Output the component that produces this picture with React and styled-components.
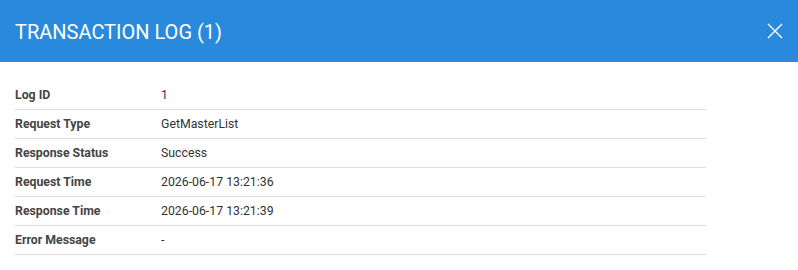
import React from 'react';
import styled, { createGlobalStyle } from 'styled-components';

const GlobalStyle = createGlobalStyle`
  body {
    margin: 0;
    background: #ffffff;
    font-family: Roboto, "Liberation Sans", sans-serif;
  }
`;

const rows = [
  { label: 'Log ID', value: '1' },
  { label: 'Request Type', value: 'GetMasterList' },
  { label: 'Response Status', value: 'Success' },
  { label: 'Request Time', value: '2026-06-17 13:21:36' },
  { label: 'Response Time', value: '2026-06-17 13:21:39' },
  { label: 'Error Message', value: '-' },
];

const App = () => {
  return (
    <Modal>
      <GlobalStyle />
      <Header>
        <Title>TRANSACTION LOG (1)</Title>
        <CloseButton aria-label="Close">
          <svg width="16" height="16" viewBox="0 0 16 16">
            <path d="M1 1 L15 15 M15 1 L1 15" stroke="#ffffff" strokeWidth="1.4" fill="none" />
          </svg>
        </CloseButton>
      </Header>
      <Body>
        <Table>
          <tbody>
            {rows.map((row) => (
              <Row key={row.label}>
                <Label>{row.label}</Label>
                <Value>{row.value}</Value>
              </Row>
            ))}
          </tbody>
        </Table>
      </Body>
    </Modal>
  );
};

const Modal = styled.div`
  width: 798px;
  background: #ffffff;
`;

const Header = styled.div`
  height: 62px;
  background: #2989dd;
  display: flex;
  align-items: center;
  justify-content: space-between;
  padding: 0 15px 0 15px;
  box-sizing: border-box;
`;

const Title = styled.h1`
  margin: 0;
  font-size: 20px;
  font-weight: 400;
  color: #ffffff;
  padding-top: 1px;
`;

const CloseButton = styled.button`
  background: none;
  border: none;
  padding: 0;
  width: 16px;
  height: 16px;
  display: flex;
  cursor: pointer;
`;

const Body = styled.div`
  padding: 18px 15px;
`;

const Table = styled.table`
  width: 691px;
  border-collapse: collapse;
`;

const Row = styled.tr`
  height: 29px;
  border-bottom: 1px solid #dddddd;
`;

const Label = styled.td`
  width: 146px;
  padding: 1px 0 0;
  font-size: 12.3px;
  font-weight: 700;
  color: #444444;
`;

const Value = styled.td`
  padding: 1px 0 0;
  font-size: 12.3px;
  color: #333333;
`;

export default App;
